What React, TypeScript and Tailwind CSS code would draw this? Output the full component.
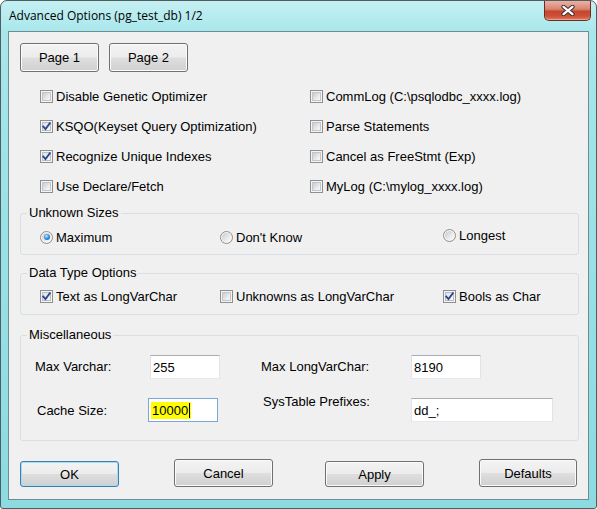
import React from "react";

function Check({ checked = false }: { checked?: boolean }) {
  return (
    <span className="relative flex h-[13px] w-[13px] shrink-0 border border-[#8e8f8f] bg-[#f4f4f4] p-[1px]">
      <span
        className={
          checked
            ? "flex-1 border border-[#b8bdc6] bg-[linear-gradient(135deg,#dde3ec,#f7f8fa)]"
            : "flex-1 border border-[#c2c5ca] bg-[linear-gradient(135deg,#c9cdd2,#eceef0_70%,#f6f6f6)]"
        }
      />
      {checked && (
        <svg className="absolute left-0 top-0" width="11" height="11" viewBox="0 0 11 11">
          <path d="M2.3 5.6 L4.5 8.1 L8.8 2.3" fill="none" stroke="#2c468c" strokeWidth="1.9" strokeLinecap="square" />
        </svg>
      )}
    </span>
  );
}

function Radio({ checked = false }: { checked?: boolean }) {
  return (
    <span className="flex h-[13px] w-[13px] shrink-0 items-center justify-center rounded-full border border-[#8e8f8f] bg-[#f4f4f4]">
      <span className="flex h-[9px] w-[9px] items-center justify-center rounded-full bg-[linear-gradient(135deg,#c6cacf,#eef0f2_70%,#fafafa)]">
        {checked && (
          <span className="h-[6px] w-[6px] rounded-full bg-[radial-gradient(circle_at_40%_35%,#c5ecff_0%,#3b95e0_45%,#0c4f95_100%)]" />
        )}
      </span>
    </span>
  );
}

function CheckItem({ label, checked = false, className = "" }: { label: string; checked?: boolean; className?: string }) {
  return (
    <div className={"flex items-center gap-[3px] " + className}>
      <Check checked={checked} />
      <span className="leading-[15px]">{label}</span>
    </div>
  );
}

function RadioItem({ label, checked = false, className = "" }: { label: string; checked?: boolean; className?: string }) {
  return (
    <div className={"flex items-center gap-[3px] " + className}>
      <Radio checked={checked} />
      <span className="leading-[15px]">{label}</span>
    </div>
  );
}

function Btn({ label, def = false, className = "" }: { label: string; def?: boolean; className?: string }) {
  return (
    <button
      className={
        "flex items-center justify-center rounded-[3px] border bg-[linear-gradient(to_bottom,#f3f3f3_0%,#ececec_48%,#dedede_52%,#d0d0d0_100%)] text-[13px] leading-[15px] text-black " +
        (def
          ? "border-[#3c7fb1] shadow-[inset_0_0_0_1px_#a8dcf3] "
          : "border-[#707070] shadow-[inset_0_0_0_1px_#fbfbfb] ") +
        className
      }
    >
      {label}
    </button>
  );
}

function Group({ title, className = "", children }: { title: string; className?: string; children: React.ReactNode }) {
  return (
    <fieldset className={"ml-[11px] w-[559px] rounded-[3px] border border-[#d5dfe5] " + className}>
      <legend className="ml-[6px] px-[2px] text-[13px] leading-[14px]">{title}</legend>
      {children}
    </fieldset>
  );
}

function TextBox({ value, className = "", focused = false }: { value: React.ReactNode; className?: string; focused?: boolean }) {
  return (
    <div
      className={
        "flex h-[24px] shrink-0 items-center bg-white pl-[2px] text-[13px] leading-[15px] " +
        (focused
          ? "border border-[#7aa7d6] "
          : "border border-[#e2e3ea] border-t-[#abadb3] border-b-[#e3e9ef] ") +
        className
      }
    >
      {value}
    </div>
  );
}

export default function App() {
  return (
    <div className="h-[509px] w-[597px] bg-white font-['Liberation_Sans',Arial,sans-serif] text-[13px] text-black">
      <div className="flex h-[509px] w-[597px] flex-col rounded-t-[7px] rounded-b-[3px] border border-[#4f5d60] bg-[linear-gradient(to_bottom,#c4f0f3_0%,#a9e7ec_6%,#9ee3e8_30%,#8bdbe1_100%)]">
        {/* title bar */}
        <div className="flex h-[30px] shrink-0 items-start">
          <span className="pl-[8px] pt-[7px] font-['Open_Sans',sans-serif] text-[12px] leading-[16px] text-black">
            Advanced Options (pg_test_db) 1/2
          </span>
          <div className="ml-auto mr-[5px] flex h-[20px] w-[47px] items-center justify-center rounded-b-[5px] border border-t-0 border-[#6b2d22] bg-[linear-gradient(to_bottom,#eab2a6_0%,#d98672_42%,#c5462e_55%,#cc5138_80%,#de7a62_100%)] shadow-[inset_0_-1px_0_#f0a08c]">
            <svg width="14" height="11" viewBox="0 0 14 11">
              <path d="M2.5 1.8 L11.5 9.2 M11.5 1.8 L2.5 9.2" stroke="#3d3030" strokeWidth="4.2" strokeLinecap="round" />
              <path d="M2.5 1.8 L11.5 9.2 M11.5 1.8 L2.5 9.2" stroke="#ffffff" strokeWidth="2.2" strokeLinecap="round" />
            </svg>
          </div>
        </div>

        {/* client area */}
        <div className="ml-[7px] flex h-[469px] w-[581px] shrink-0 flex-col border border-[#6e8d92] bg-[#f0f0f0]">
          {/* page buttons */}
          <div className="ml-[11px] mt-[11px] flex gap-[10px]">
            <Btn label="Page 1" className="h-[29px] w-[79px]" />
            <Btn label="Page 2" className="h-[29px] w-[79px]" />
          </div>

          {/* checkbox options */}
          <div className="ml-[31px] mt-[9px] flex">
            <div className="flex w-[270px] flex-col">
              <CheckItem label="Disable Genetic Optimizer" className="h-[30px]" />
              <CheckItem label="KSQO(Keyset Query Optimization)" checked className="h-[30px]" />
              <CheckItem label="Recognize Unique Indexes" checked className="h-[30px]" />
              <CheckItem label="Use Declare/Fetch" className="h-[30px]" />
            </div>
            <div className="flex flex-col">
              <CheckItem label="CommLog (C:\psqlodbc_xxxx.log)" className="h-[30px]" />
              <CheckItem label="Parse Statements" className="h-[30px]" />
              <CheckItem label="Cancel as FreeStmt (Exp)" className="h-[30px]" />
              <CheckItem label="MyLog (C:\mylog_xxxx.log)" className="h-[30px]" />
            </div>
          </div>

          {/* Unknown Sizes */}
          <Group title="Unknown Sizes" className="mt-[5px] h-[49px]">
            <div className="mt-[8px] flex h-[18px] items-center pl-[19px]">
              <RadioItem label="Maximum" checked className="w-[180px]" />
              <RadioItem label="Don't Know" className="w-[223px]" />
              <RadioItem label="Longest" className="mb-[4px]" />
            </div>
          </Group>

          {/* Data Type Options */}
          <Group title="Data Type Options" className="mt-[11px] h-[49px]">
            <div className="mt-[7px] flex h-[18px] items-center pl-[19px]">
              <CheckItem label="Text as LongVarChar" checked className="w-[180px]" />
              <CheckItem label="Unknowns as LongVarChar" className="w-[223px]" />
              <CheckItem label="Bools as Char" checked />
            </div>
          </Group>

          {/* Miscellaneous */}
          <Group title="Miscellaneous" className="mt-[13px] h-[113px]">
            <div className="mt-[13px] flex h-[24px] items-center pl-[14px]">
              <span className="w-[115px]">Max Varchar:</span>
              <TextBox value="255" className="w-[70px]" />
              <span className="ml-[41px] w-[150px]">Max LongVarChar:</span>
              <TextBox value="8190" className="w-[70px]" />
            </div>
            <div className="mt-[19px] flex h-[24px] items-center pl-[16px]">
              <span className="w-[111px] pt-[1px]">Cache Size:</span>
              <TextBox
                focused
                className="w-[70px]"
                value={
                  <span className="flex h-[17px] items-center bg-[#ffff00] pl-[1px] pr-[1px]">
                    10000<span className="ml-[1px] h-[15px] w-[1px] bg-black" />
                  </span>
                }
              />
              <span className="mb-[16px] ml-[45px] w-[148px]">SysTable Prefixes:</span>
              <TextBox value="dd_;" className="w-[142px]" />
            </div>
          </Group>

          {/* bottom buttons */}
          <div className="ml-[11px] mt-[18px] flex h-[28px] items-end">
            <Btn label="OK" def className="h-[26px] w-[99px]" />
            <Btn label="Cancel" className="ml-[55px] h-[28px] w-[99px]" />
            <Btn label="Apply" className="ml-[52px] h-[26px] w-[99px]" />
            <Btn label="Defaults" className="ml-[55px] h-[28px] w-[98px]" />
          </div>
        </div>
      </div>
    </div>
  );
}
